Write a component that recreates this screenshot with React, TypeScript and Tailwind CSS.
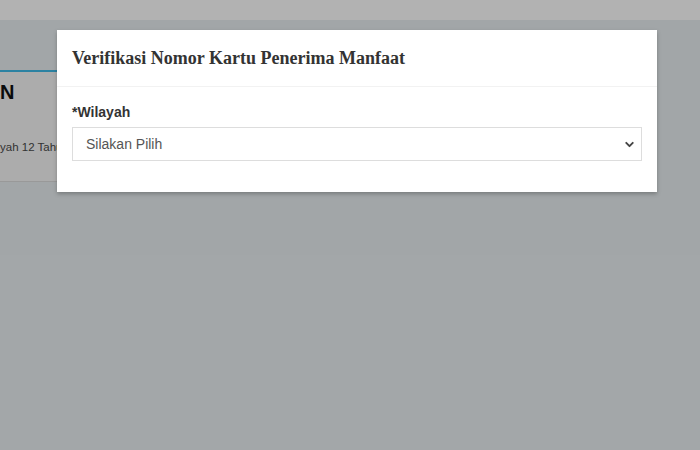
import { ChevronDown } from 'lucide-react';

export default function App() {
  return (
    <div className="relative h-[450px] w-[700px] overflow-hidden bg-[#e9eef1] font-['Liberation_Sans',Arial,sans-serif]">
      {/* page behind the modal */}
      <div className="h-[20px] bg-white" />
      <div className="pt-[50px]">
        <div className="h-[112px] w-[600px] border-t-2 border-b border-[#40bbe9] border-b-[#dcdcdc] bg-[#f6f6f6]">
          <div className="pt-[8px] text-[20px] font-bold leading-[24px] text-[#111]">N</div>
          <div className="mt-[35px] text-[11.5px] leading-[16px] text-[#4a4a4a]">yah 12 Tahun</div>
        </div>
      </div>

      {/* overlay */}
      <div className="absolute inset-0 bg-black/30" />

      {/* modal */}
      <div className="absolute left-[57px] top-[30px] w-[600px] bg-white shadow-[0_2px_4px_rgba(0,0,0,0.25)]">
        <div className="border-b border-[#f2f2f2] px-[15px] py-[15px]">
          <h4 className="font-['Liberation_Serif','Times_New_Roman',serif] text-[18px] font-bold leading-[26px] text-[#333]">
            Verifikasi Nomor Kartu Penerima Manfaat
          </h4>
        </div>
        <div className="px-[15px] pb-[16px] pt-[15px]">
          <div className="mb-[15px]">
            <label className="mb-[5px] block text-[14px] font-bold leading-[20px] text-[#333]">*Wilayah</label>
            <div className="relative">
              <select className="block h-[34px] w-full appearance-none border border-[#ddd] bg-white px-[13px] text-[14px] text-[#555] outline-none">
                <option>Silakan Pilih</option>
              </select>
              <ChevronDown className="pointer-events-none absolute right-[6px] top-[11px] h-[13px] w-[13px] text-[#444]" strokeWidth={3.5} />
            </div>
          </div>
        </div>
      </div>
    </div>
  );
}
